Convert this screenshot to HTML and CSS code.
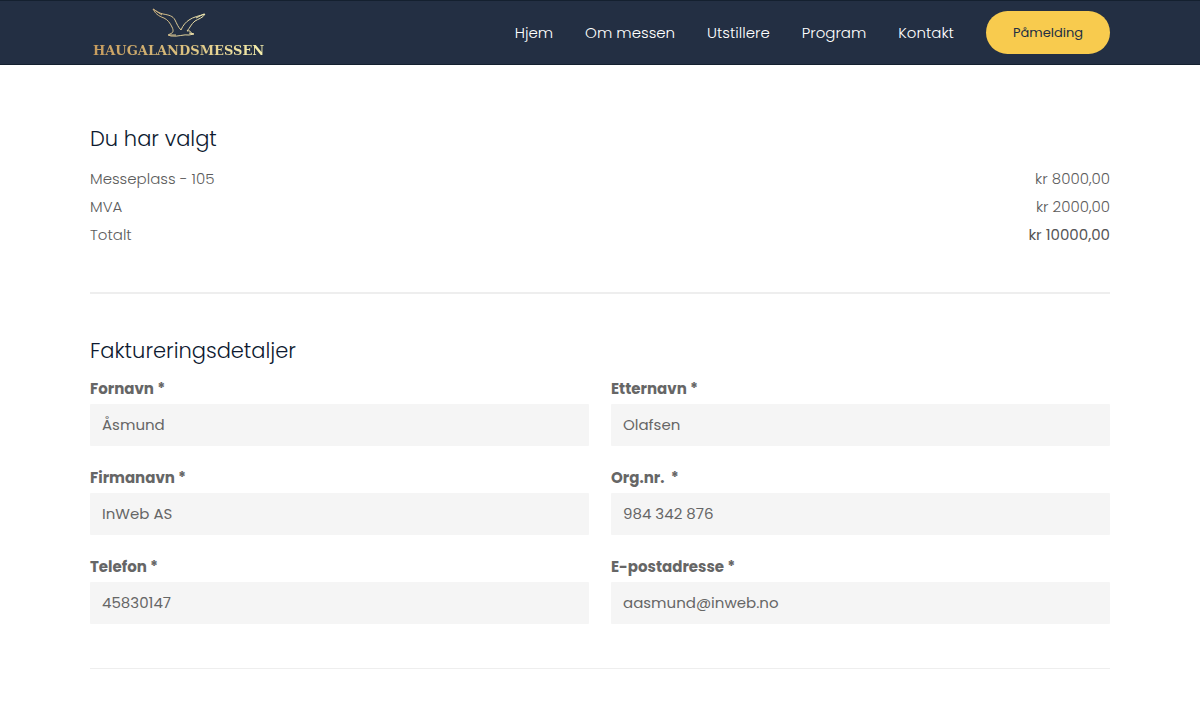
FILE: index.html
```html
<!DOCTYPE html>
<html lang="no">
<head>
<meta charset="utf-8">
<meta name="viewport" content="width=device-width, initial-scale=1">
<title>Haugalandsmessen – Påmelding</title>
<link rel="stylesheet" href="styles.css">
</head>
<body>
<header class="site-header">
  <div class="container header-inner">
    <a class="logo" href="#">
      <svg class="logo-bird" viewBox="0 0 54 30" width="54" height="30" aria-hidden="true">
        <defs>
          <linearGradient id="gold" x1="0" x2="1" y1="0" y2="0">
            <stop offset="0" stop-color="#c9ae7c"/>
            <stop offset="1" stop-color="#efe7b0"/>
          </linearGradient>
        </defs>
        <path d="M1 1 C4 3 7 5 11 6 C17 7 21 8 23 12 C25 16 26 19 29 22 C31 17 34 14 37 12 C41 9 47 8 53 6 C51 10 46 11 43 13 C39 16 38 20 35 23 C38 22 39 24 39 25 L42 26 L37 27 C32 26 26 29 19 28 L16 27 L18 26 C21 25 22 23 20 19 C18 15 16 12 12 10 C6 8 3 5 1 1 Z" fill="none" stroke="url(#gold)" stroke-width="1" stroke-linejoin="round"/>
        <path d="M1 1 L10 7 M44 10 L52 6 M37 25 L41 26 M17 27 L24 27" fill="none" stroke="url(#gold)" stroke-width="1"/>
      </svg>
      <span class="logo-name">HAUGALANDSMESSEN</span>
    </a>
    <nav class="menu">
      <a class="menu-link" href="#">Hjem</a>
      <a class="menu-link" href="#">Om messen</a>
      <a class="menu-link" href="#">Utstillere</a>
      <a class="menu-link" href="#">Program</a>
      <a class="menu-link" href="#">Kontakt</a>
      <a class="menu-button" href="#">Påmelding</a>
    </nav>
  </div>
</header>
<main class="container">
  <section class="order">
    <h2 class="title">Du har valgt</h2>
    <dl class="lines">
      <div class="line"><dt>Messeplass - 105</dt><dd>kr 8000,00</dd></div>
      <div class="line"><dt>MVA</dt><dd>kr 2000,00</dd></div>
      <div class="line line-total"><dt>Totalt</dt><dd>kr 10000,00</dd></div>
    </dl>
  </section>
  <form class="billing">
    <h2 class="title">Faktureringsdetaljer</h2>
    <div class="fields">
      <div class="field"><label for="fornavn">Fornavn *</label><input id="fornavn" type="text" value="Åsmund"></div>
      <div class="field"><label for="etternavn">Etternavn *</label><input id="etternavn" type="text" value="Olafsen"></div>
      <div class="field"><label for="firma">Firmanavn *</label><input id="firma" type="text" value="InWeb AS"></div>
      <div class="field"><label for="orgnr">Org.nr.&nbsp; *</label><input id="orgnr" type="text" value="984 342 876"></div>
      <div class="field"><label for="telefon">Telefon *</label><input id="telefon" type="tel" value="45830147"></div>
      <div class="field"><label for="epost">E-postadresse *</label><input id="epost" type="email" value="aasmund@inweb.no"></div>
    </div>
  </form>
</main>
</body>
</html>
```
FILE: styles.css
```css
* { box-sizing: border-box; }

body {
  margin: 0;
  background: #fff;
  color: #5c5c5c;
  font-family: Poppins, Inter, sans-serif;
  font-size: 15px;
  font-weight: 300;
  line-height: 28px;
}

.container {
  width: 85%;
  margin: 0 auto;
}

.site-header {
  background: #232f43;
  border-top: 1px solid #14202f;
  border-bottom: 1px solid #14202f;
}

.header-inner {
  display: flex;
  align-items: center;
  justify-content: space-between;
  min-height: 63px;
}

.logo {
  display: flex;
  flex-direction: column;
  align-items: center;
  gap: 3px;
  padding: 3px 0 0 3px;
  text-decoration: none;
}

.logo-name {
  background: linear-gradient(90deg, #c79c5e, #d9bd7c 50%, #f6f0ae);
  background-clip: text;
  -webkit-background-clip: text;
  color: transparent;
  font-family: "DejaVu Serif", serif;
  font-size: 13px;
  font-weight: 700;
  line-height: 20px;
}

.menu {
  display: flex;
  align-items: center;
  gap: 32px;
}

.menu-link {
  color: #fff;
  text-decoration: none;
}

.menu-button {
  padding: 8px 27px 7px;
  border-radius: 24px;
  background: #f8cb4e;
  color: #232f43;
  font-size: 13px;
  font-weight: 400;
  text-decoration: none;
}

.title {
  margin: 0;
  color: #0e1a30;
  font-size: 21px;
  font-weight: 300;
  line-height: 28px;
}

.order {
  padding: 60px 0 43px;
  border-bottom: 2px solid #eee;
}

.lines { margin: 12px 0 0; }

.line {
  display: flex;
  justify-content: space-between;
}

.line dd { margin: 0; }

.line-total dd {
  color: #555;
  font-weight: 400;
}

.billing {
  padding: 43px 0 44px;
  border-bottom: 1px solid #eee;
}

.fields {
  display: grid;
  grid-template-columns: 1fr 1fr;
  gap: 18px 22px;
  margin-top: 10px;
}

.field {
  display: flex;
  flex-direction: column;
  gap: 1px;
}

.field label {
  color: #666;
  font-weight: 700;
}

.field input {
  width: 100%;
  height: 42px;
  padding: 0 12px 2px;
  border: 0;
  border-radius: 1px;
  background: #f5f5f5;
  color: #666;
  font: inherit;
  font-weight: 400;
}
```
